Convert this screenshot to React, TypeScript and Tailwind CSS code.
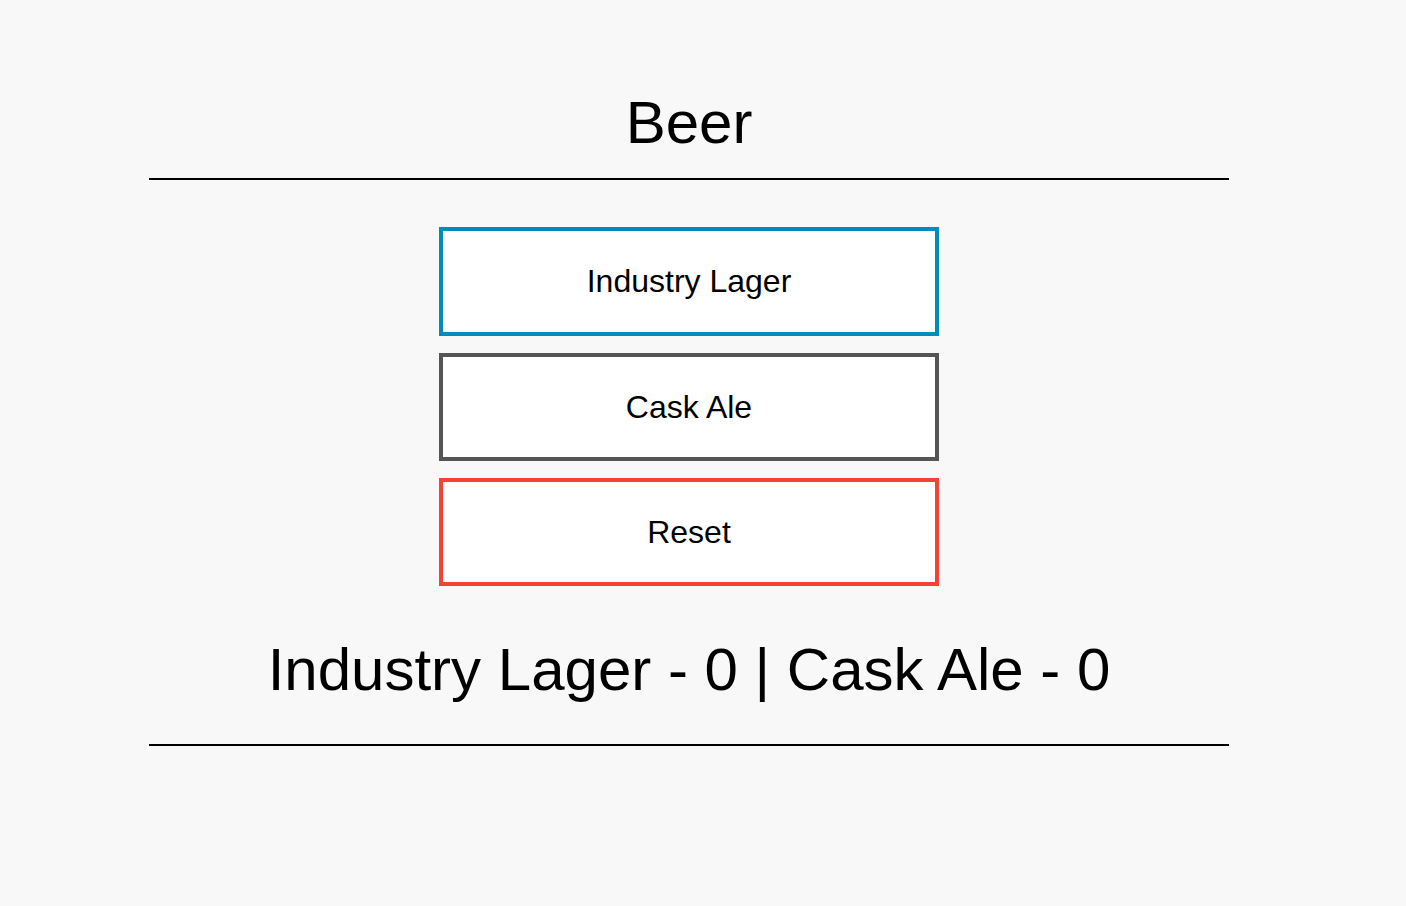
import React, { useState } from "react";

export default function App() {
  const [lager, setLager] = useState(0);
  const [ale, setAle] = useState(0);
  const font = { fontFamily: '"Liberation Sans", Arial, sans-serif' };
  return (
    <div className="min-h-[906px] w-full bg-[#f8f8f8] text-black" style={font}>
      <div className="ml-[149px] w-[1080px] flex flex-col items-center pt-[88px]">
        <h1 className="text-[60px] leading-[69px] font-normal">Beer</h1>
        <div className="mt-[21px] h-[2px] w-full bg-black" />
        <div className="mt-[47px] flex flex-col gap-[17px]">
          <button
            onClick={() => setLager(lager + 1)}
            className="w-[500px] h-[109px] bg-white border-4 border-[#008CBA] text-[32px] leading-[37px] text-black"
          >
            Industry Lager
          </button>
          <button
            onClick={() => setAle(ale + 1)}
            className="w-[500px] h-[108px] bg-white border-4 border-[#555555] text-[32px] leading-[37px] text-black"
          >
            Cask Ale
          </button>
          <button
            onClick={() => {
              setLager(0);
              setAle(0);
            }}
            className="w-[500px] h-[108px] bg-white border-4 border-[#f44336] text-[32px] leading-[37px] text-black"
          >
            Reset
          </button>
        </div>
        <p className="mt-[49px] text-[60px] leading-[69px]">
          Industry Lager - {lager} | Cask Ale - {ale}
        </p>
        <div className="mt-[40px] h-[2px] w-full bg-black" />
      </div>
    </div>
  );
}
